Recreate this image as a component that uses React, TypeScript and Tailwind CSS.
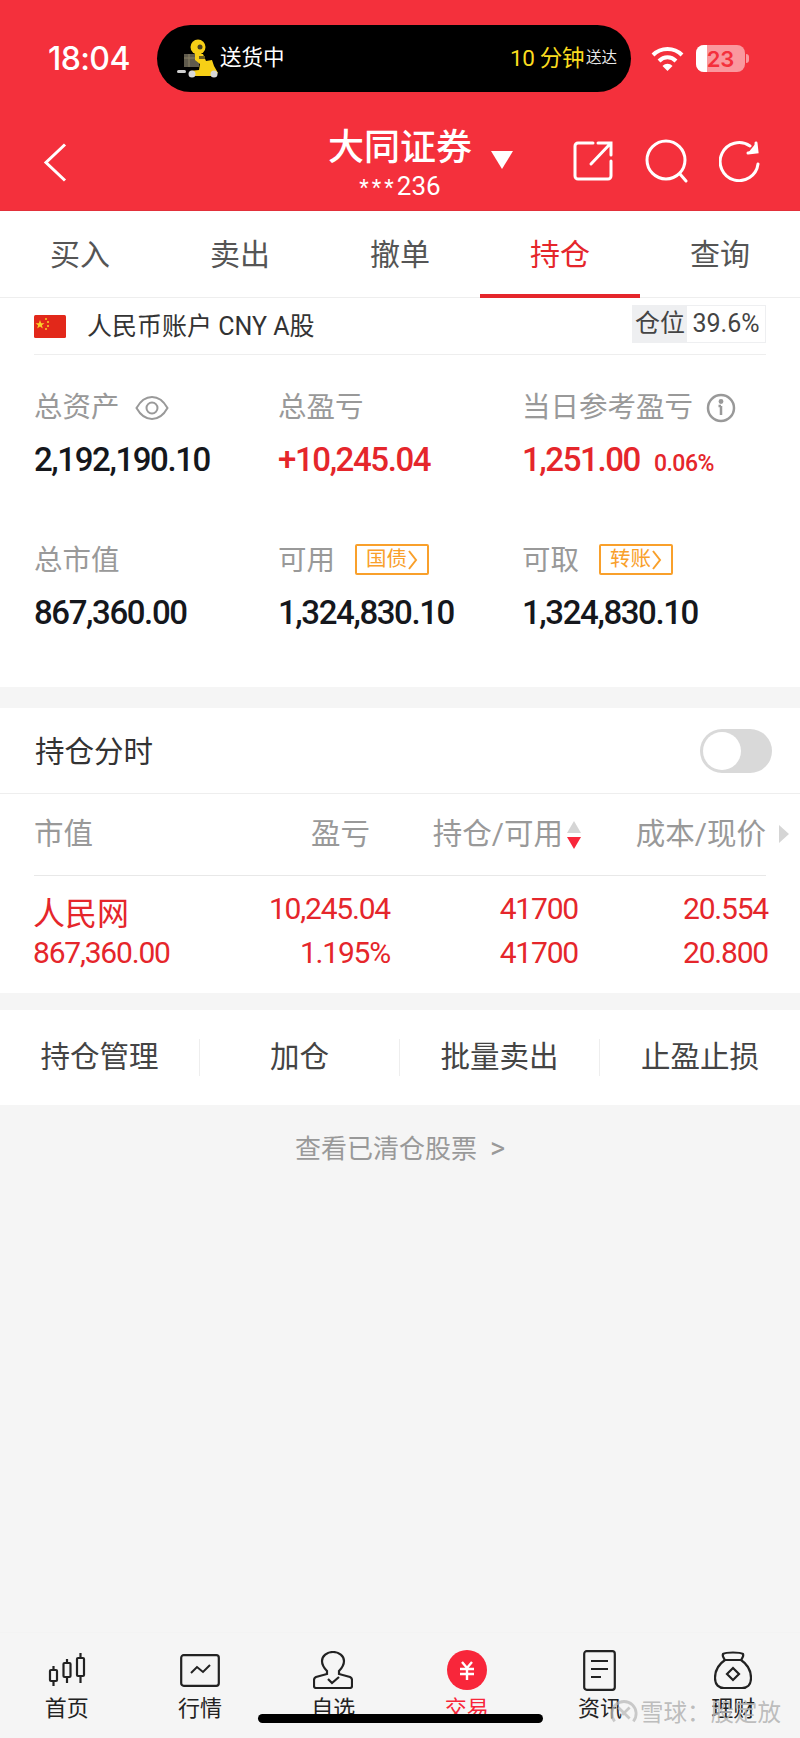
import React from 'react';

const tabs = ['买入', '卖出', '撤单', '持仓', '查询'];
const actions = ['持仓管理', '加仓', '批量卖出', '止盈止损'];

const Stat = ({ label, children, extra, red }: { label: string; children: React.ReactNode; extra?: React.ReactNode; red?: boolean }) => (
  <div className="flex flex-col">
    <div className="flex items-center h-[40px] text-[28.500px] text-[#999999] whitespace-nowrap">
      <span>{label}</span>
      {extra}
    </div>
    <div className={`mt-[7px] flex items-baseline h-[40px] text-[33px] font-medium tracking-[-1.4px] whitespace-nowrap ${red ? 'text-[#e5262b]' : 'text-[#15171c]'}`}>
      {children}
    </div>
  </div>
);

const Tag = ({ text }: { text: string }) => (
  <span className="ml-[20px] mb-[3px] flex items-center justify-center w-[74px] h-[31px] border-2 border-[#f9a02b] rounded-[2px] text-[20.500px] tracking-normal text-[#f9a02b] whitespace-nowrap">
    {text}
    <svg width="11" height="20" viewBox="0 0 11 20" fill="none" stroke="#f9a02b" strokeWidth="2"><path d="M2 1l7 9-7 9" /></svg>
  </span>
);

const NavItem = ({ label, active, children }: { label: string; active?: boolean; children: React.ReactNode }) => (
  <div className="flex flex-col items-center pt-[15px]">
    <div className="h-[44px] flex items-center justify-center">{children}</div>
    <span className={`mt-[4px] text-[22px] leading-[26px] ${active ? 'text-[#f8263a]' : 'text-[#222222]'}`}>{label}</span>
  </div>
);

export default function App() {
  return (
    <div className="relative w-[800px] h-[1738px] overflow-hidden flex flex-col bg-[#f5f5f5] font-['Roboto','Noto_Sans_CJK_SC',sans-serif]">
      {/* red header */}
      <div className="h-[211px] shrink-0 bg-[#f4303c] border-b border-[#e2303a] flex flex-col text-white">
        <div className="mt-[25px] h-[67px] flex items-center">
          <span className="ml-[48px] w-[82px] text-[32px] font-medium font-['Inter'] tracking-[-0.6px] whitespace-nowrap">18:04</span>
          <div className="ml-[27px] w-[474px] h-[67px] rounded-[34px] bg-black flex items-center">
            <svg className="ml-[20px]" width="42" height="40" viewBox="0 0 42 40">
              <rect x="7" y="15" width="15" height="13" fill="#5f5a4c" />
              <path d="M7 19h15M12 15v13" stroke="#8a8166" strokeWidth="1" />
              <circle cx="21" cy="8" r="7.500" fill="#f7cf16" />
              <circle cx="23" cy="8" r="2.500" fill="#4a4020" />
              <path d="M18 15h8l3 7 6-1 2 6 4 7-5 3H16l-3-5 9-1 1-6-5-4z" fill="#f7cf16" />
              <path d="M22 17h6v3h-6z" fill="#6a5a20" />
              <circle cx="15" cy="35" r="3.500" fill="#d8d8d8" />
              <circle cx="37" cy="35" r="3.500" fill="#d8d8d8" />
              <rect x="0" y="31" width="9" height="3" rx="1.500" fill="#cfcfcf" />
            </svg>
            <span className="ml-[1px] text-[21.500px] whitespace-nowrap">送货中</span>
            <span className="ml-auto text-[22.500px] tracking-[-0.4px] text-[#fbdc1f] whitespace-nowrap">10 分钟</span>
            <span className="ml-[2px] mr-[14px] text-[15.500px] text-[#e8e8e8] whitespace-nowrap">送达</span>
          </div>
          <svg className="ml-[20px]" width="33" height="25" viewBox="0 0 33 25" fill="none" stroke="#fff" strokeWidth="4">
            <path d="M2 9c8-8 21-8 29 0" />
            <path d="M8 15c5-5 12-5 17 0" />
            <path d="M16.500 25l-5-5c3-3 7-3 10 0z" fill="#fff" stroke="none" />
          </svg>
          <div className="relative ml-[12px] w-[49px] h-[27px] rounded-[8px] bg-white/50 overflow-hidden flex items-center justify-center">
            <div className="absolute left-0 top-0 bottom-0 w-[11px] bg-white" />
            <span className="relative text-[22px] leading-none font-semibold font-['Inter'] text-[#f4303c]">23</span>
          </div>
          <div className="ml-[1px] w-[3px] h-[9px] rounded-r-[3px] bg-white/50" />
        </div>
        <div className="mt-[33px] flex items-start">
          <svg className="ml-[43px] mt-[18px]" width="24" height="39" viewBox="0 0 24 39" fill="none" stroke="#fff" strokeWidth="3">
            <path d="M22 1.500L3 19.500l19 18" />
          </svg>
          <div className="ml-[261px] w-[144px] flex flex-col items-center">
            <span className="text-[36px] leading-[46px] font-medium whitespace-nowrap">大同证券</span>
            <span className="mt-[2px] text-[26px] leading-[26px] whitespace-nowrap"><span className="text-[22px] tracking-[3px]">***</span>236</span>
          </div>
          <svg className="ml-[19px] mt-[26px]" width="22" height="18" viewBox="0 0 22 18"><path d="M0 0h22L11 18z" fill="#fff" /></svg>
          <svg className="ml-[60px] mt-[16px]" width="40" height="40" viewBox="0 0 40 40" fill="none" stroke="#fff" strokeWidth="3" strokeLinecap="round">
            <path d="M20 2H5a3 3 0 0 0-3 3v30a3 3 0 0 0 3 3h30a3 3 0 0 0 3-3V20" />
            <path d="M18 23L37 3M25 2h13v12" />
          </svg>
          <svg className="ml-[32px] mt-[14px]" width="44" height="44" viewBox="0 0 44 44" fill="none" stroke="#fff" strokeWidth="3" strokeLinecap="round">
            <circle cx="21" cy="21" r="19" />
            <path d="M35 35l6 7" />
          </svg>
          <svg className="ml-[30px] mt-[15px]" width="42" height="42" viewBox="0 0 42 42" fill="none" stroke="#fff" strokeWidth="3" strokeLinecap="round">
            <path d="M39 24A19 19 0 1 1 31 6" />
            <path d="M37 3l1 9-9 1" fill="#fff" />
          </svg>
        </div>
      </div>

      {/* tabs */}
      <div className="h-[87px] shrink-0 bg-white border-b border-[#eeeeee] grid grid-cols-5">
        {tabs.map((t, i) => (
          <div key={t} className={`flex items-center justify-center text-[30px] ${i === 3 ? 'text-[#e5262b] border-b-[4px] border-[#e5262b] h-[87px] pt-[4px]' : 'text-[#555555]'}`}>
            {t}
          </div>
        ))}
      </div>

      {/* account + stats */}
      <div className="h-[389px] shrink-0 bg-white px-[34px] flex flex-col">
        <div className="h-[57px] shrink-0 border-b border-[#eeeeee] flex items-center">
          <svg width="32" height="23" viewBox="0 0 32 23">
            <rect width="32" height="23" rx="1.500" fill="#e2281a" />
            <path d="M6 5l1.200 3.200 3.300.1-2.600 2 .9 3.200L6 11.600l-2.800 1.900.9-3.200-2.600-2 3.300-.1z" fill="#f8d02a" />
            <circle cx="12" cy="4" r="1" fill="#f8d02a" />
            <circle cx="14" cy="7" r="1" fill="#f8d02a" />
            <circle cx="14" cy="11" r="1" fill="#f8d02a" />
            <circle cx="12" cy="14" r="1" fill="#f8d02a" />
          </svg>
          <span className="ml-[21px] mt-[2px] text-[25px] text-[#333333] whitespace-nowrap">人民币账户 CNY A股</span>
          <div className="ml-auto w-[134px] h-[38px] mb-[4px] flex border border-[#eeeff1] bg-white text-[25px] text-[#444444]">
            <div className="w-[54px] bg-[#eeeff1] flex items-center justify-center whitespace-nowrap">仓位</div>
            <div className="flex-1 flex items-center justify-center whitespace-nowrap">39.6%</div>
          </div>
        </div>
        <div className="mt-[33px] grid grid-cols-[244px_244px_1fr]">
          <Stat
            label="总资产"
            extra={
              <svg className="ml-[15px]" width="34" height="26" viewBox="0 0 34 26" fill="none" stroke="#999999" strokeWidth="2">
                <path d="M1.500 13C6 5 11 2 17 2s11 3 15.500 11C28 21 23 24 17 24S6 21 1.500 13z" />
                <circle cx="17" cy="13" r="5.500" />
              </svg>
            }
          >
            2,192,190.10
          </Stat>
          <Stat label="总盈亏" red>+10,245.04</Stat>
          <Stat
            label="当日参考盈亏"
            red
            extra={
              <svg className="ml-[13px]" width="30" height="30" viewBox="0 0 30 30" fill="none" stroke="#999999" strokeWidth="2.500">
                <circle cx="15" cy="15" r="13" />
                <path d="M15 13v9M12.500 13H15" />
                <circle cx="15" cy="8.500" r="1.200" fill="#999999" />
              </svg>
            }
          >
            1,251.00<span className="ml-[14px] text-[23px] tracking-[-0.5px]">0.06%</span>
          </Stat>
        </div>
        <div className="mt-[66px] grid grid-cols-[244px_244px_1fr]">
          <Stat label="总市值">867,360.00</Stat>
          <Stat label="可用" extra={<Tag text="国债" />}>1,324,830.10</Stat>
          <Stat label="可取" extra={<Tag text="转账" />}>1,324,830.10</Stat>
        </div>
      </div>

      {/* holdings */}
      <div className="mt-[21px] h-[285px] shrink-0 bg-white flex flex-col">
        <div className="h-[86px] shrink-0 border-b border-[#eeeeee] pl-[35px] pr-[28px] flex items-center justify-between">
          <span className="mt-[3px] text-[29.500px] text-[#333333]">持仓分时</span>
          <div className="w-[72px] h-[44px] rounded-full bg-[#d9d9d9] p-[3px]">
            <div className="w-[38px] h-[38px] rounded-full bg-white" />
          </div>
        </div>
        <div className="relative h-[82px] shrink-0 mx-[34px] border-b border-[#e8e8e8] grid grid-cols-[200px_136px_212px_1fr] items-center text-[29.500px] text-[#999999]">
          <span>市值</span>
          <span className="text-right">盈亏</span>
          <span className="flex items-center justify-end whitespace-nowrap">
            持仓/可用
            <svg className="ml-[3px]" width="16" height="32" viewBox="0 0 16 32">
              <path d="M8 2l7 12H1z" fill="#d5d5d5" />
              <path d="M1 18h14L8 30z" fill="#f8263a" />
            </svg>
          </span>
          <span className="text-right whitespace-nowrap">成本/现价</span>
          <svg className="absolute right-[-24px] top-[31px]" width="12" height="18" viewBox="0 0 12 18"><path d="M1 0l10 9-10 9z" fill="#d5d5d5" /></svg>
        </div>
        <div className="h-[117px] shrink-0 pl-[33px] pr-[32px] grid grid-cols-[178px_179px_188px_1fr] grid-rows-[44px_44px] pt-[11px] text-[30px] leading-[44px] text-[#e5262b] tracking-[-1.2px] text-right">
          <span className="text-left text-[32px] mt-[5px] tracking-normal">人民网</span>
          <span>10,245.04</span>
          <span>41700</span>
          <span>20.554</span>
          <span className="text-left whitespace-nowrap">867,360.00</span>
          <span>1.195%</span>
          <span>41700</span>
          <span>20.800</span>
        </div>
      </div>

      {/* actions */}
      <div className="mt-[17px] h-[95px] shrink-0 bg-white grid grid-cols-4 items-center">
        {actions.map((a, i) => (
          <div key={a} className={`h-[37px] flex items-center justify-center text-[29.500px] text-[#444444] ${i < 3 ? 'border-r border-[#eeeeee]' : ''}`}>
            {a}
          </div>
        ))}
      </div>

      <div className="mt-[26px] h-[36px] flex items-center justify-center text-[26px] text-[#999999]">
        查看已清仓股票<span className="ml-[13px] text-[29px]">&gt;</span>
      </div>

      {/* bottom nav */}
      <div className="mt-auto h-[106px] shrink-0 grid grid-cols-6 items-start border-t border-[#f3f3f3]">
        <NavItem label="首页">
          <svg width="38" height="36" viewBox="0 0 38 36" fill="none" stroke="#222222" strokeWidth="2.200">
            <rect x="2" y="18" width="7" height="11" rx="1" />
            <path d="M5.500 14v4M5.500 29v5" />
            <rect x="15.500" y="11" width="7" height="14" rx="1" />
            <path d="M19 7v4M19 25v6" />
            <rect x="29" y="6" width="7" height="18" rx="1" />
            <path d="M32.500 1v5M32.500 24v7" />
          </svg>
        </NavItem>
        <NavItem label="行情">
          <svg width="40" height="33" viewBox="0 0 40 33" fill="none" stroke="#222222" strokeWidth="2.200">
            <rect x="1.200" y="1.200" width="37.600" height="30.600" rx="2.500" />
            <path d="M11 19l6-6 6 5 7-7" strokeWidth="2" />
          </svg>
        </NavItem>
        <NavItem label="自选">
          <svg width="40" height="38" viewBox="0 0 40 38" fill="none" stroke="#222222" strokeWidth="2.200">
            <path d="M14 20c-3-3-5-6-5-10a11 9 0 0 1 22 0c0 4-2 7-5 10v3l11 3c1 .5 2 1.500 2 3v6a2 2 0 0 1-2 2H3a2 2 0 0 1-2-2v-6c0-1.500 1-2.500 2-3l11-3z" />
            <path d="M15 28l4 4 7-6" />
          </svg>
        </NavItem>
        <NavItem label="交易" active>
          <div className="w-[40px] h-[40px] rounded-full bg-[#f8263a] flex items-center justify-center">
            <svg width="16" height="19" viewBox="0 0 16 19" fill="none" stroke="#fff" strokeWidth="2.400">
              <path d="M3 1l5 6 5-6M1 8h14M1 13h14M8 7v12" />
            </svg>
          </div>
        </NavItem>
        <NavItem label="资讯">
          <svg width="33" height="41" viewBox="0 0 33 41" fill="none" stroke="#222222" strokeWidth="2.200">
            <rect x="1.200" y="1.200" width="30.600" height="38.600" rx="2.500" />
            <path d="M8 11h17M8 19h17M8 27h10" />
          </svg>
        </NavItem>
        <NavItem label="理财">
          <svg width="38" height="39" viewBox="0 0 38 39" fill="none" stroke="#222222" strokeWidth="2.200">
            <path d="M11 9C9 6 8 5 9 3c3-2 17-2 20 0 1 2 0 3-2 6" />
            <path d="M11 9h16c6 4 10 11 10 18 0 7-4 10-9 10H10c-5 0-9-3-9-10 0-7 4-14 10-18z" />
            <path d="M19 17l6 6-6 6-6-6z" />
          </svg>
        </NavItem>
      </div>

      {/* home indicator and watermark sit over the nav */}
      <div className="absolute left-[258px] top-[1714px] w-[285px] h-[9px] rounded-full bg-black" />
      <div className="absolute left-[610px] top-[1698px] flex items-center text-[23.500px] leading-[30px] text-[#b5b5b5]/90">
        <svg width="28" height="28" viewBox="0 0 30 30" fill="none" stroke="#b5b5b5" strokeWidth="3">
          <path d="M5 24A13 13 0 1 1 25 24" strokeOpacity="0.7" />
          <path d="M9 9l12 12M21 9L13 17" strokeOpacity="0.7" />
        </svg>
        <span className="ml-[2px] whitespace-nowrap">雪球：股定放</span>
      </div>
    </div>
  );
}
